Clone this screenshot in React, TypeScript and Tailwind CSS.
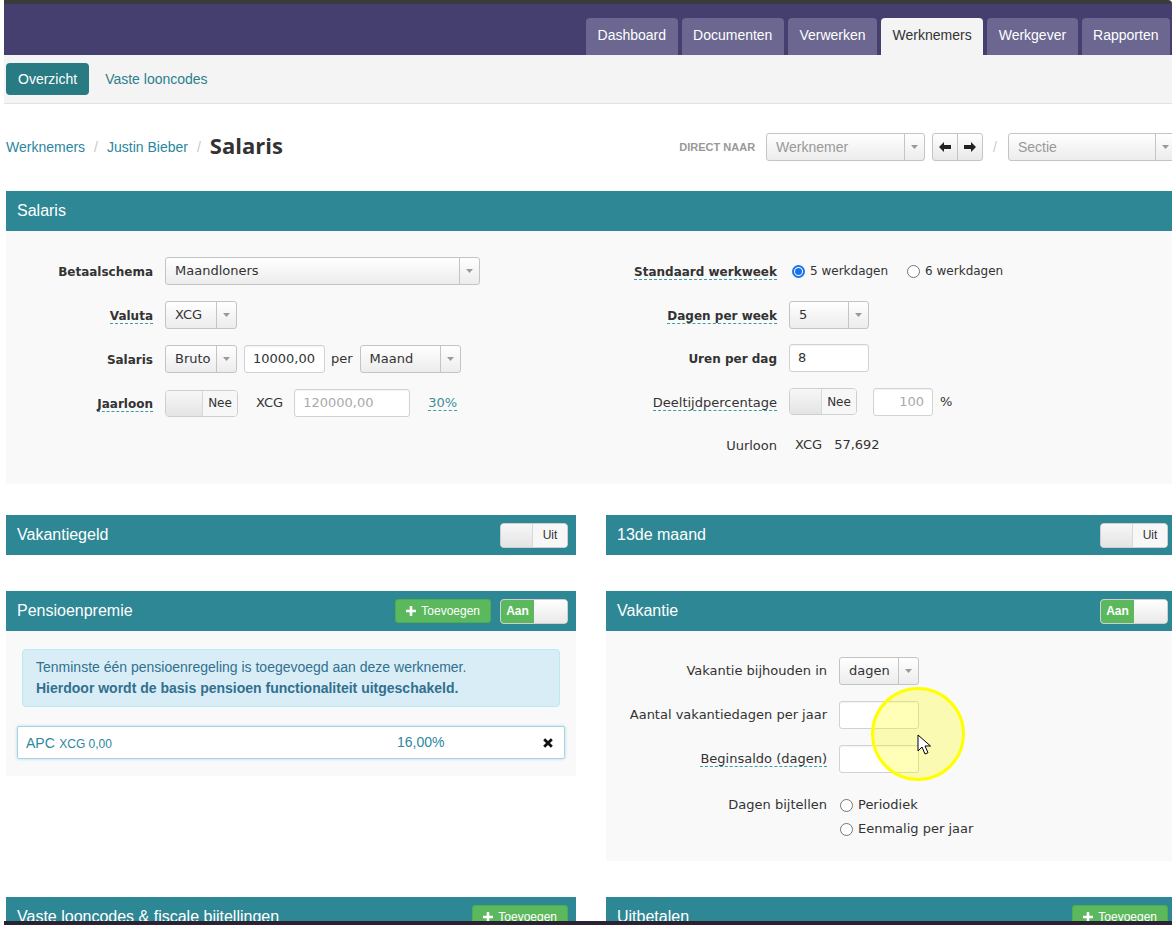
import React from 'react'

const dv = "font-['DejaVu_Sans',Verdana,sans-serif]"

function Caret() {
  return (
    <svg width="7" height="4" viewBox="0 0 7 4">
      <path d="M0 0h7L3.5 4z" fill="#9a9a9a" />
    </svg>
  )
}

function Select({ value, w, muted }: { value: string; w: string; muted?: boolean }) {
  return (
    <div className={`flex h-[28px] items-stretch rounded-[3px] border border-[#c4c4c4] bg-linear-to-b from-white to-[#ececec] ${w}`}>
      <span className={`flex flex-1 items-center pl-[9px] ${muted ? 'text-[14px] text-[#999]' : 'text-[13px] text-[#333]'}`}>{value}</span>
      <span className="flex w-[20px] items-center justify-center border-l border-[#c4c4c4]">
        <Caret />
      </span>
    </div>
  )
}

function Input({ value, w, placeholder, right }: { value?: string; w: string; placeholder?: string; right?: boolean }) {
  return (
    <div className={`flex h-[28px] items-center rounded-[3px] border border-[#d2d2d2] bg-white px-[8px] text-[13px] shadow-[inset_0_1px_1px_rgba(0,0,0,0.05)] ${right ? 'justify-end' : ''} ${w}`}>
      {value ? <span className="text-[#333]">{value}</span> : <span className="text-[#aaa]">{placeholder}</span>}
    </div>
  )
}

function Toggle({ on, label, w, h }: { on?: boolean; label: string; w: string; h: string }) {
  if (on) {
    return (
      <div className={`flex overflow-hidden rounded-[4px] border border-[#cfcfcf] bg-white ${w} ${h}`}>
        <span className="flex w-1/2 items-center justify-center bg-[#5cb85c] text-[12px] font-bold text-white">{label}</span>
        <span className="w-1/2 bg-linear-to-b from-white to-[#e9e9e9]" />
      </div>
    )
  }
  return (
    <div className={`flex overflow-hidden rounded-[4px] border border-[#cfcfcf] bg-white ${w} ${h}`}>
      <span className="flex-1 bg-linear-to-b from-[#f7f7f7] to-[#e4e4e4]" />
      <span className="flex w-[35px] items-center justify-center border-l border-[#d8d8d8] bg-[#f7f7f7] text-[12px] text-[#333]">{label}</span>
    </div>
  )
}

function Plus() {
  return (
    <svg width="10" height="10" viewBox="0 0 10 10">
      <path d="M3.7 0h2.6v3.7H10v2.6H6.3V10H3.7V6.3H0V3.7h3.7z" fill="#fff" />
    </svg>
  )
}

function AddButton() {
  return (
    <div className="flex h-[24px] items-center gap-[5px] rounded-[3px] border border-[#4cae4c] bg-[#5cb85c] px-[10px] text-[12px] text-white">
      <Plus />
      <span>Toevoegen</span>
    </div>
  )
}

function Radio({ checked }: { checked?: boolean }) {
  if (checked) {
    return (
      <span className="flex h-[13px] w-[13px] shrink-0 items-center justify-center rounded-full border-2 border-[#1a73e8] bg-white">
        <span className="h-[7px] w-[7px] rounded-full bg-[#1a73e8]" />
      </span>
    )
  }
  return <span className="block h-[13px] w-[13px] shrink-0 rounded-full border border-[#767676] bg-white" />
}

function Dashed({ children }: { children: React.ReactNode }) {
  return <span className="border-b border-dashed border-[#3a9ea3] leading-[16px]">{children}</span>
}

function PanelHeader({ title, children }: { title: string; children?: React.ReactNode }) {
  return (
    <div className="flex h-[40px] items-center justify-between bg-[#2e8794] pl-[11px] pr-[8px] text-[16px] text-white">
      <span>{title}</span>
      <div className="flex items-center gap-[9px]">{children}</div>
    </div>
  )
}

function ArrowBtn({ dir }: { dir: 'left' | 'right' }) {
  return (
    <span className="flex w-[24px] items-center justify-center">
      <svg width="12" height="10" viewBox="0 0 12 10">
        {dir === 'left' ? (
          <path d="M0 5L5 0v3h7v4H5v3z" fill="#222" />
        ) : (
          <path d="M12 5L7 0v3H0v4h7v3z" fill="#222" />
        )}
      </svg>
    </span>
  )
}

function FormRow({ label, lw, children }: { label: React.ReactNode; lw: string; children?: React.ReactNode }) {
  return (
    <div className="flex h-[28px] items-center">
      <div className={`shrink-0 text-right text-[#333] ${lw}`}>{label}</div>
      <div className="ml-[12px] flex items-center">{children}</div>
    </div>
  )
}

const tabs = ['Dashboard', 'Documenten', 'Verwerken', 'Werknemers', 'Werkgever', 'Rapporten']

export default function App() {
  return (
    <div className="relative h-[929px] w-[1176px] overflow-hidden bg-white font-['Liberation_Sans',Arial,sans-serif]">
      <div className="ml-[4px] w-[1168px]">
        <div className="h-[4px] rounded-tr-[4px] bg-[#3b3b3b]" />
        <div className="h-[917px] overflow-hidden bg-white">
          {/* top nav */}
          <div className="h-[51px] bg-[#453f70]">
            <div className="ml-[2px] flex h-full w-[1170px] items-end justify-end gap-[4px] pr-[6px]">
              {tabs.map((t) => (
                <div
                  key={t}
                  className={`flex h-[37px] items-center rounded-t-[4px] px-[11.5px] pb-[3px] text-[14px] ${
                    t === 'Werknemers' ? 'bg-[#f4f4f4] text-[#333]' : 'bg-[#6b6790] text-white'
                  }`}
                >
                  {t}
                </div>
              ))}
            </div>
          </div>

          {/* sub nav */}
          <div className="h-[49px] border-b border-[#e2e2e2] bg-[#f4f4f4]">
            <div className="ml-[2px] flex w-[1170px] items-center pt-[8px]">
              <div className="flex h-[32px] items-center rounded-[4px] bg-[#287b82] px-[12px] text-[14px] text-white">Overzicht</div>
              <div className="ml-[16px] text-[14px] text-[#2a7f8c]">Vaste looncodes</div>
            </div>
          </div>

          <div className="ml-[2px] w-[1170px]">
            {/* breadcrumb */}
            <div className="mt-[29px] flex h-[28px] items-center justify-between">
              <div className="flex items-center text-[14px]">
                <span className="text-[#2b86a0]">Werknemers</span>
                <span className="px-[9px] text-[#c8c8c8]">/</span>
                <span className="text-[#2b86a0]">Justin Bieber</span>
                <span className="px-[9px] text-[#c8c8c8]">/</span>
                <span className="-mt-[5px] font-['Open_Sans',sans-serif] text-[22px] font-bold leading-[28px] text-[#333]">Salaris</span>
              </div>
              <div className="flex items-center">
                <span className="text-[11px] font-bold text-[#999]">DIRECT NAAR</span>
                <div className="ml-[11px]">
                  <Select value="Werknemer" w="w-[159px]" muted />
                </div>
                <div className="ml-[7px] flex h-[28px] rounded-[3px] border border-[#c4c4c4] bg-linear-to-b from-white to-[#e8e8e8]">
                  <ArrowBtn dir="left" />
                  <span className="w-px bg-[#c4c4c4]" />
                  <ArrowBtn dir="right" />
                </div>
                <span className="ml-[10px] text-[14px] text-[#ccc]">/</span>
                <div className="ml-[11px]">
                  <Select value="Sectie" w="w-[168px]" muted />
                </div>
              </div>
            </div>

            {/* Salaris panel */}
            <div className="mt-[30px]">
              <PanelHeader title="Salaris" />
              <div className={`flex h-[253px] bg-[#f9f9f9] pt-[26px] ${dv}`}>
                <div className="flex w-[585px] flex-col gap-[16px]">
                  <FormRow lw="w-[147px]" label={<span className="text-[12px] font-bold">Betaalschema</span>}>
                    <Select value="Maandloners" w="w-[315px]" />
                  </FormRow>
                  <FormRow lw="w-[147px]" label={<span className="text-[12px] font-bold"><Dashed>Valuta</Dashed></span>}>
                    <Select value="XCG" w="w-[72px]" />
                  </FormRow>
                  <FormRow lw="w-[147px]" label={<span className="text-[12px] font-bold">Salaris</span>}>
                    <Select value="Bruto" w="w-[72px]" />
                    <div className="ml-[7px]">
                      <Input value="10000,00" w="w-[81px]" />
                    </div>
                    <span className="ml-[6px] text-[13px] text-[#333]">per</span>
                    <div className="ml-[7px]">
                      <Select value="Maand" w="w-[101px]" />
                    </div>
                  </FormRow>
                  <FormRow lw="w-[147px]" label={<span className="text-[12px] font-bold"><Dashed>Jaarloon</Dashed></span>}>
                    <Toggle label="Nee" w="w-[73px]" h="h-[27px]" />
                    <span className="ml-[18px] text-[13px] text-[#333]">XCG</span>
                    <div className="ml-[11px]">
                      <Input placeholder="120000,00" w="w-[116px]" />
                    </div>
                    <span className="ml-[18px] text-[13px] text-[#3a8f99]">
                      <Dashed>30%</Dashed>
                    </span>
                  </FormRow>
                </div>
                <div className="flex flex-1 flex-col gap-[15.5px]">
                  <FormRow lw="w-[186px]" label={<span className="text-[12px] font-bold"><Dashed>Standaard werkweek</Dashed></span>}>
                    <span className="ml-[3px]"><Radio checked /></span>
                    <span className="ml-[5px] text-[12px] text-[#333]">5 werkdagen</span>
                    <span className="ml-[19px]"><Radio /></span>
                    <span className="ml-[5px] text-[12px] text-[#333]">6 werkdagen</span>
                  </FormRow>
                  <FormRow lw="w-[186px]" label={<span className="text-[12px] font-bold"><Dashed>Dagen per week</Dashed></span>}>
                    <Select value="5" w="w-[80px]" />
                  </FormRow>
                  <FormRow lw="w-[186px]" label={<span className="text-[12px] font-bold">Uren per dag</span>}>
                    <Input value="8" w="w-[80px]" />
                  </FormRow>
                  <FormRow lw="w-[186px]" label={<span className="text-[13px]"><Dashed>Deeltijdpercentage</Dashed></span>}>
                    <Toggle label="Nee" w="w-[68px]" h="h-[27px]" />
                    <div className="ml-[16px]">
                      <Input placeholder="100" w="w-[60px]" right />
                    </div>
                    <span className="ml-[7px] text-[13px] text-[#333]">%</span>
                  </FormRow>
                  <FormRow lw="w-[186px]" label={<span className="text-[13px]">Uurloon</span>}>
                    <span className="ml-[6px] text-[13px] text-[#333]">XCG</span>
                    <span className="ml-[12px] text-[13px] text-[#333]">57,692</span>
                  </FormRow>
                </div>
              </div>
            </div>

            {/* lower panels */}
            <div className="mt-[31px] grid grid-cols-2 items-start gap-x-[30px] gap-y-[36px]">
              <PanelHeader title="Vakantiegeld">
                <Toggle label="Uit" w="w-[68px]" h="h-[25px]" />
              </PanelHeader>
              <PanelHeader title="13de maand">
                <Toggle label="Uit" w="w-[68px]" h="h-[25px]" />
              </PanelHeader>

              <div>
                <PanelHeader title="Pensioenpremie">
                  <AddButton />
                  <Toggle on label="Aan" w="w-[68px]" h="h-[25px]" />
                </PanelHeader>
                <div className="bg-[#f9f9f9] px-[11px] pb-[17px] pt-[18px]">
                  <div className="mx-[5px] rounded-[4px] border border-[#bce8f1] bg-[#d9edf7] px-[13px] py-[7px] text-[14px] leading-[21px] text-[#31708f]">
                    <div>Tenminste één pensioenregeling is toegevoegd aan deze werknemer.</div>
                    <div className="font-bold">Hierdoor wordt de basis pensioen functionaliteit uitgeschakeld.</div>
                  </div>
                  <div className="mt-[19px] flex h-[33px] items-center rounded-[2px] border border-[#a9d3e4] bg-white pl-[8px] pr-[11px] shadow-[0_0_3px_rgba(102,175,233,0.5)]">
                    <div className="w-[371px] text-[#2d87a0]">
                      <span className="text-[14px]">APC</span> <span className="text-[12px]">XCG 0,00</span>
                    </div>
                    <span className="flex-1 text-[14px] text-[#2d87a0]">16,00%</span>
                    <svg width="10" height="10" viewBox="0 0 10 10">
                      <path d="M1.2 1.2l7.6 7.6M8.8 1.2L1.2 8.8" stroke="#111" strokeWidth="2.8" />
                    </svg>
                  </div>
                </div>
              </div>

              <div>
                <PanelHeader title="Vakantie">
                  <Toggle on label="Aan" w="w-[68px]" h="h-[25px]" />
                </PanelHeader>
                <div className={`flex flex-col gap-[16px] bg-[#f9f9f9] pb-[20px] pt-[26px] text-[13px] ${dv}`}>
                  <FormRow lw="w-[221px]" label="Vakantie bijhouden in">
                    <Select value="dagen" w="w-[80px]" />
                  </FormRow>
                  <FormRow lw="w-[221px]" label="Aantal vakantiedagen per jaar">
                    <Input w="w-[80px]" />
                  </FormRow>
                  <FormRow lw="w-[221px]" label={<Dashed>Beginsaldo (dagen)</Dashed>}>
                    <Input w="w-[80px]" />
                  </FormRow>
                  <div className="mt-[4px] flex items-start">
                    <div className="w-[221px] shrink-0 text-right leading-[24px] text-[#333]">Dagen bijtellen</div>
                    <div className="ml-[13px] flex flex-col">
                      <div className="flex h-[24px] items-center">
                        <Radio />
                        <span className="ml-[5px] text-[#333]">Periodiek</span>
                      </div>
                      <div className="flex h-[24px] items-center">
                        <Radio />
                        <span className="ml-[5px] text-[#333]">Eenmalig per jaar</span>
                      </div>
                    </div>
                  </div>
                </div>
              </div>

              <PanelHeader title="Vaste looncodes & fiscale bijtellingen">
                <AddButton />
              </PanelHeader>
              <PanelHeader title="Uitbetalen">
                <AddButton />
              </PanelHeader>
            </div>
          </div>
        </div>
        <div className="h-[4px] bg-[#2b2331]" />
      </div>

      {/* cursor highlight */}
      <div className="absolute left-[871px] top-[687px] h-[94px] w-[94px] rounded-full border-[3px] border-[#ffff00] bg-[rgba(255,255,0,0.28)]" />
      <svg className="absolute left-[917px] top-[734px]" width="14" height="22" viewBox="0 0 14 22">
        <path d="M1 1v16l4-4 3 7 3-1.3-3-6.7h5.5z" fill="#fff" stroke="#000" strokeWidth="1" strokeLinejoin="round" />
      </svg>
    </div>
  )
}
